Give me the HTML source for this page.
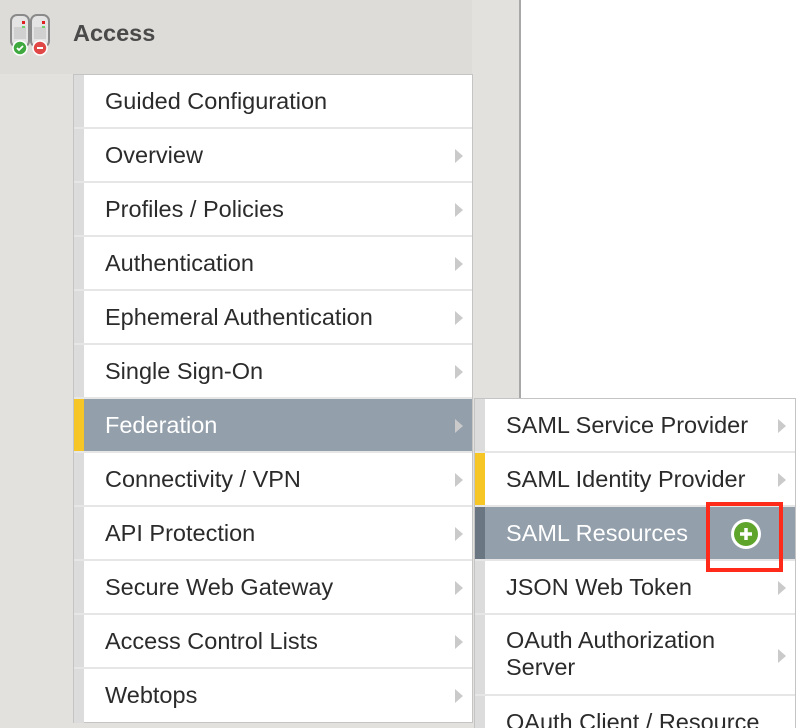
<!DOCTYPE html>
<html><head><meta charset="utf-8"><style>
*{margin:0;padding:0;box-sizing:border-box}
html,body{width:806px;height:728px;overflow:hidden}
body{background:#fff;font-family:"Liberation Sans",Arial,sans-serif;position:relative}
.panel{position:absolute;left:0;top:0;width:521px;height:728px;background:#e2e1dd;border-right:2px solid #a8a8a8}
.hdr{position:absolute;left:0;top:0;width:472px;height:74px;background:#dddcd8}
.title{position:absolute;left:73px;top:20px;font-size:23.5px;font-weight:bold;color:#4a4a4a}
.menu{position:absolute;left:73px;top:74px;width:400px;height:649px;background:#fff;border:1px solid #c4c4c4}
.row{position:absolute;left:0;width:398px;height:54px;border-bottom:2px solid #e6e6e6}
.stripe{position:absolute;left:0;top:0;width:10px;height:100%;background:#dcdcdc}
.row span{position:absolute;left:31px;top:13px;font-size:23.5px;color:#2b2b2b;white-space:nowrap}
.arr{position:absolute;right:9px;top:20px;width:0;height:0;border-left:8px solid #cacaca;border-top:7px solid transparent;border-bottom:7px solid transparent}
.sel{background:#939fab}
.sel span{color:#fff}
.sub{position:absolute;left:474px;top:398px;width:322px;height:340px;background:#fff;border:1px solid #c4c4c4}
.sub .row{width:320px}
</style></head><body>
<div class="panel"></div>
<div class="hdr"></div>
<svg style="position:absolute;left:9px;top:13px" width="46" height="44" viewBox="0 0 46 44">
<rect x="2" y="2" width="18" height="32" rx="6" fill="#e4e4e4" stroke="#8a8a8a" stroke-width="2"/>
<rect x="22" y="2" width="18" height="32" rx="6" fill="#e4e4e4" stroke="#8a8a8a" stroke-width="2"/>
<rect x="5" y="14" width="12" height="12" fill="#d0d0d0"/><rect x="25" y="14" width="12" height="12" fill="#d0d0d0"/>
<rect x="13" y="8" width="3" height="3" fill="#e02020"/><rect x="13" y="13" width="3" height="2" fill="#70d070"/>
<rect x="33" y="8" width="3" height="3" fill="#e02020"/><rect x="33" y="13" width="3" height="2" fill="#70d070"/>
<circle cx="11" cy="35" r="7" fill="#3fa83f" stroke="#fff" stroke-width="1.5"/>
<path d="M8 35l2 2 4-4" stroke="#fff" stroke-width="1.8" fill="none"/>
<circle cx="31" cy="35" r="7" fill="#e04848" stroke="#fff" stroke-width="1.5"/>
<path d="M28 35h6" stroke="#fff" stroke-width="2"/>
</svg>
<div class="title">Access</div>
<div class="menu">
<div class="row" style="top:0"><div class="stripe"></div><span>Guided Configuration</span></div>
<div class="row" style="top:54px"><div class="stripe"></div><span>Overview</span><i class="arr"></i></div>
<div class="row" style="top:108px"><div class="stripe"></div><span>Profiles / Policies</span><i class="arr"></i></div>
<div class="row" style="top:162px"><div class="stripe"></div><span>Authentication</span><i class="arr"></i></div>
<div class="row" style="top:216px"><div class="stripe"></div><span>Ephemeral Authentication</span><i class="arr"></i></div>
<div class="row" style="top:270px"><div class="stripe"></div><span>Single Sign-On</span><i class="arr"></i></div>
<div class="row sel" style="top:324px"><div class="stripe" style="background:#f6c526"></div><span>Federation</span><i class="arr"></i></div>
<div class="row" style="top:378px"><div class="stripe"></div><span>Connectivity / VPN</span><i class="arr"></i></div>
<div class="row" style="top:432px"><div class="stripe"></div><span>API Protection</span><i class="arr"></i></div>
<div class="row" style="top:486px"><div class="stripe"></div><span>Secure Web Gateway</span><i class="arr"></i></div>
<div class="row" style="top:540px"><div class="stripe"></div><span>Access Control Lists</span><i class="arr"></i></div>
<div class="row" style="top:594px;border-bottom:none"><div class="stripe"></div><span>Webtops</span><i class="arr"></i></div>
</div>
<div class="sub">
<div class="row" style="top:0"><div class="stripe"></div><span>SAML Service Provider</span><i class="arr"></i></div>
<div class="row" style="top:54px"><div class="stripe" style="background:#f6c526"></div><span>SAML Identity Provider</span><i class="arr"></i></div>
<div class="row sel" style="top:108px"><div class="stripe" style="background:#6b7683"></div><span>SAML Resources</span></div>
<div class="row" style="top:162px"><div class="stripe"></div><span>JSON Web Token</span><i class="arr"></i></div>
<div class="row" style="top:216px;height:81px"><div class="stripe"></div><span style="top:12px;line-height:27px">OAuth Authorization<br>Server</span><i class="arr" style="top:34px"></i></div>
<div class="row" style="top:297px"><div class="stripe"></div><span>OAuth Client / Resource</span></div>
</div>
<div style="position:absolute;left:706px;top:502px;width:77px;height:70px;border:4px solid #ff2a1a"></div>
<svg style="position:absolute;left:729px;top:517px" width="34" height="34" viewBox="0 0 34 34">
<circle cx="17" cy="17" r="15" fill="#fff"/>
<circle cx="17" cy="17" r="12" fill="#5fa52c"/>
<path d="M17 11v12M11 17h12" stroke="#fff" stroke-width="3.5"/>
</svg>
</body></html>
